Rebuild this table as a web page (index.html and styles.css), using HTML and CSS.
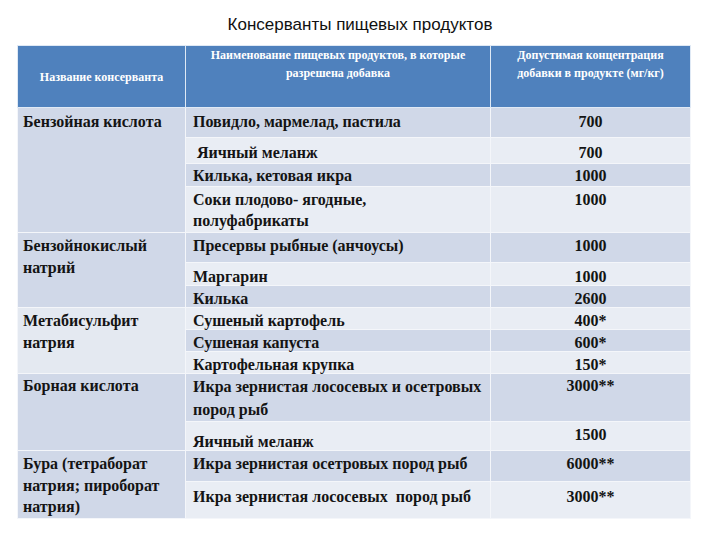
FILE: index.html
```html
<!DOCTYPE html>
<html>
<head>
<meta charset="utf-8">
<title>Консерванты пищевых продуктов</title>
<link rel="stylesheet" href="styles.css">
</head>
<body>
<h1 class="title">Консерванты пищевых продуктов</h1>
<table class="grid">
  <colgroup>
    <col class="c1"><col class="c2"><col class="c3">
  </colgroup>
  <thead>
    <tr class="head">
      <th class="h1">Название консерванта</th>
      <th class="h2">Наименование пищевых продуктов, в которые<br>разрешена добавка</th>
      <th class="h3">Допустимая концентрация<br>добавки в продукте (мг/кг)</th>
    </tr>
  </thead>
  <tbody>
    <tr class="r1 dark">
      <td class="name n-dark" rowspan="4">Бензойная кислота</td>
      <td>Повидло, мармелад, пастила</td>
      <td class="num">700</td>
    </tr>
    <tr class="r2 light">
      <td class="indent">Яичный меланж</td>
      <td class="num">700</td>
    </tr>
    <tr class="r3 dark">
      <td>Килька, кетовая икра</td>
      <td class="num">1000</td>
    </tr>
    <tr class="r4 light">
      <td class="multi">Соки плодово- ягодные,<br>полуфабрикаты</td>
      <td class="num">1000</td>
    </tr>
    <tr class="r5 dark">
      <td class="name n-dark wrap2" rowspan="3">Бензойнокислый<br>натрий</td>
      <td>Пресервы рыбные (анчоусы)</td>
      <td class="num">1000</td>
    </tr>
    <tr class="r6 light">
      <td>Маргарин</td>
      <td class="num">1000</td>
    </tr>
    <tr class="r7 dark">
      <td>Килька</td>
      <td class="num">2600</td>
    </tr>
    <tr class="r8 light">
      <td class="name n-light wrap2" rowspan="3">Метабисульфит<br>натрия</td>
      <td>Сушеный картофель</td>
      <td class="num">400*</td>
    </tr>
    <tr class="r9 dark">
      <td>Сушеная капуста</td>
      <td class="num">600*</td>
    </tr>
    <tr class="r10 light">
      <td>Картофельная крупка</td>
      <td class="num">150*</td>
    </tr>
    <tr class="r11 dark">
      <td class="name n-dark" rowspan="2">Борная кислота</td>
      <td class="multi2">Икра зернистая лососевых и осетровых<br>пород рыб</td>
      <td class="num">3000**</td>
    </tr>
    <tr class="r12 light">
      <td class="low">Яичный меланж</td>
      <td class="num">1500</td>
    </tr>
    <tr class="r13 dark">
      <td class="name n-dark tall" rowspan="2">Бура (тетраборат<br>натрия; пироборат<br>натрия)</td>
      <td>Икра зернистая осетровых пород рыб</td>
      <td class="num">6000**</td>
    </tr>
    <tr class="r14 light">
      <td>Икра зернистая лососевых&nbsp; пород рыб</td>
      <td class="num">3000**</td>
    </tr>
  </tbody>
</table>
</body>
</html>
```

FILE: styles.css
```css
html, body {
  margin: 0;
  padding: 0;
  background: #ffffff;
}

.title {
  margin: 0;
  height: 45px;
  padding-top: 14px;
  box-sizing: border-box;
  text-align: center;
  font-family: "Liberation Sans", Arial, sans-serif;
  font-weight: normal;
  font-size: 17px;
  line-height: 22px;
  color: #111111;
}

.grid {
  margin-left: 17px;
  width: 673px;
  table-layout: fixed;
  border-collapse: collapse;
  font-family: "Liberation Serif", "Times New Roman", serif;
  color: #141414;
}

.c1 { width: 168px; }
.c2 { width: 305px; }
.c3 { width: 200px; }

.grid th,
.grid td {
  border: 1px solid #f4f6fa;
  box-sizing: border-box;
  font-family: "Liberation Serif", "Times New Roman", serif;
}

.head { height: 62px; }

.grid th {
  background: #4f81bd;
  color: #ffffff;
  font-size: 12px;
  font-weight: bold;
  line-height: 18px;
  padding: 0 4px;
  text-align: center;
  border-color: #dfe9f5;
}

.h1 {
  vertical-align: middle;
  padding-bottom: 8px;
}

.h2,
.h3 {
  vertical-align: top;
  padding-top: 2px;
}

.grid td {
  font-size: 16px;
  font-weight: bold;
  line-height: 16px;
  vertical-align: top;
  padding: 5px 7px 0;
  white-space: nowrap;
}

.grid td.name {
  padding-left: 5px;
}

.dark td { background: #d0d8e8; }
.light td { background: #e9edf4; }
.grid td.n-dark { background: #d0d8e8; }
.grid td.n-light { background: #e4e9f1; }

.num { text-align: center; }

.r1 { height: 30px; }
.r2 { height: 26px; }
.r3 { height: 23px; }
.r4 { height: 46px; }
.r5 { height: 30px; }
.r6 { height: 23px; }
.r7 { height: 22px; }
.r8 { height: 22px; }
.r9 { height: 22px; }
.r10 { height: 22px; }
.r11 { height: 47px; }
.r12 { height: 29px; }
.r13 { height: 30px; }
.r14 { height: 36px; }

.r1 td { padding-top: 6px; }
.r2 td { padding-top: 7px; }
.r3 td { padding-top: 4px; }
.r6 td { padding-top: 6px; }
.r11 td { padding-top: 4px; }
.r14 td { padding-top: 7px; }

.grid td.multi {
  line-height: 21px;
  padding-top: 2px;
}
.grid td.multi2 {
  line-height: 23px;
  padding-top: 1px;
}
.grid td.wrap2 {
  line-height: 22px;
  padding-top: 2px;
}
.grid td.low { padding-top: 12px; }
.grid td.indent { padding-left: 11px; }
.grid td.tall {
  line-height: 21.5px;
  padding-top: 2px;
}
```
